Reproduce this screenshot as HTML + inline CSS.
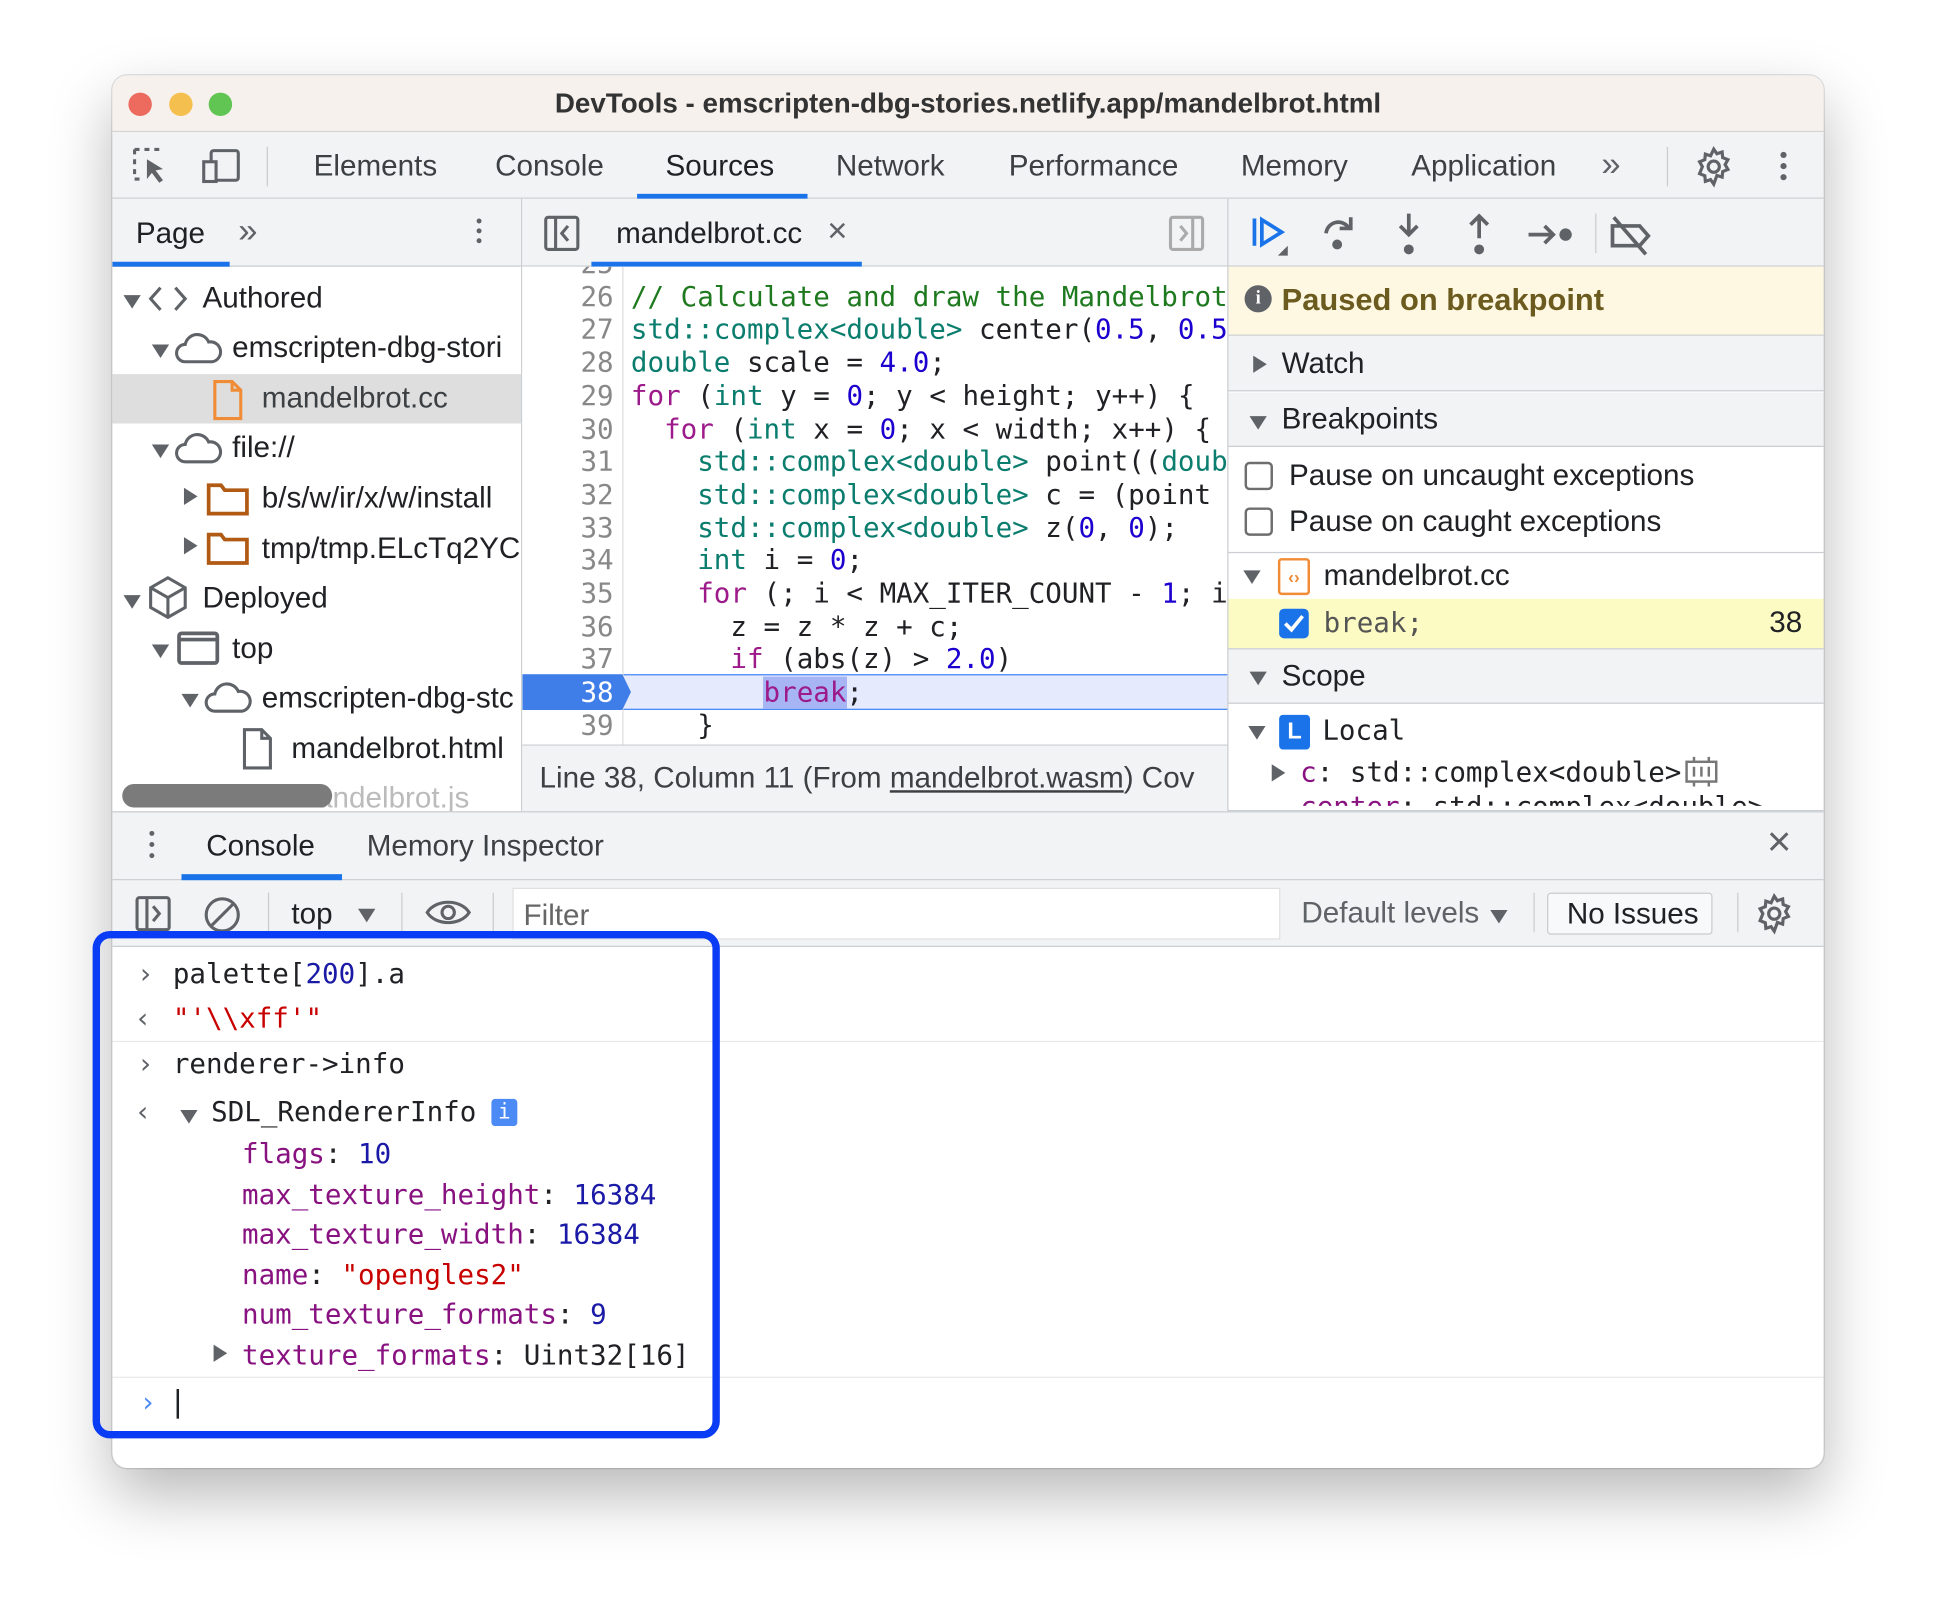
<!DOCTYPE html>
<html><head><meta charset="utf-8"><style>
*{box-sizing:border-box;margin:0;padding:0}
body{width:1936px;height:1616px;background:#fff;overflow:hidden;position:relative;font-family:"Liberation Sans",Arial,sans-serif;color:#202124}
#s{position:absolute;left:0;top:0;width:1568px;height:1309px;transform:scale(1.23469);transform-origin:0 0}
.a{position:absolute;white-space:nowrap}
.win{position:absolute;left:91px;top:61px;width:1386px;height:1128px;border-radius:12px;background:#fff;overflow:hidden;box-shadow:0 22px 50px rgba(0,0,0,.28),0 0 0 1px rgba(0,0,0,.12)}
.t{font-size:24px;line-height:28px}
.m{font-family:"DejaVu Sans Mono","Liberation Mono",monospace;font-size:22.3px;line-height:26.7px;white-space:pre}
.gr{background:#f1f3f4}
.cm{color:#1f7a1f}.ty{color:#0b7d6e}.kw{color:#9c1a8a}.nu{color:#1c00cf}.st{color:#c80000}.pr{color:#881280}.nb{color:#1a1aa6}
.tri{display:inline-block;width:0;height:0;border-left:7px solid transparent;border-right:7px solid transparent;border-top:11px solid #5f6368}
.trr{display:inline-block;width:0;height:0;border-top:7px solid transparent;border-bottom:7px solid transparent;border-left:11px solid #5f6368}
.hl{position:absolute;height:1px;background:#cacdd1}
</style></head><body><div id="s">
<div class="win">
 <div class="a" style="left:0;top:0;width:1386px;height:46px;background:#f6f1ed;border-bottom:1px solid #d6d3d0"></div>
 <div class="a" style="left:13px;top:14px;width:19px;height:19px;border-radius:50%;background:#ed6a5e"></div>
 <div class="a" style="left:46px;top:14px;width:19px;height:19px;border-radius:50%;background:#f5bf4f"></div>
 <div class="a" style="left:78px;top:14px;width:19px;height:19px;border-radius:50%;background:#61c554"></div>
 <div class="a" style="left:0;width:1386px;top:9px;text-align:center;font-weight:bold;font-size:22.5px;line-height:28px;color:#333">DevTools - emscripten-dbg-stories.netlify.app/mandelbrot.html</div>
 <div class="a gr" style="left:0;top:46px;width:1386px;height:54px;border-bottom:1px solid #cacdd1"></div>
 <svg class="a" style="left:16px;top:58px" width="36" height="32" viewBox="0 0 36 32" fill="none" stroke="#5f6368" stroke-width="2.5"><path d="M2 2h4M10 2h4M18 2h4M2 2v4M2 10v4M2 18v4M2 26h4" /><path d="M12 10l0 16 4-5 6 8 3-2-6-8 6-1z" fill="#5f6368" stroke="none"/></svg>
 <svg class="a" style="left:72px;top:58px" width="36" height="32" fill="none" stroke="#5f6368" stroke-width="2.5"><rect x="8" y="3" width="22" height="24" rx="2"/><rect x="2" y="12" width="10" height="16" fill="#f1f3f4"/></svg>
 <div class="a" style="left:125px;top:58px;width:1px;height:32px;background:#ccc"></div>
 <div class="a t" style="left:163px;top:60px;color:#3c4043">Elements</div>
 <div class="a t" style="left:310px;top:60px;color:#3c4043">Console</div>
 <div class="a t" style="left:448px;top:60px;color:#202124">Sources</div>
 <div class="a" style="left:425px;top:96px;width:138px;height:4px;background:#1a73e8"></div>
 <div class="a t" style="left:586px;top:60px;color:#3c4043">Network</div>
 <div class="a t" style="left:726px;top:60px;color:#3c4043">Performance</div>
 <div class="a t" style="left:914px;top:60px;color:#3c4043">Memory</div>
 <div class="a t" style="left:1052px;top:60px;color:#3c4043">Application</div>
 <div class="a t" style="left:1206px;top:58px;color:#5f6368;font-size:28px">&#187;</div>
 <div class="a" style="left:1259px;top:58px;width:1px;height:32px;background:#ccc"></div>
 <svg class="a" style="left:1280px;top:57px" width="34" height="34" viewBox="0 0 24 24" fill="none" stroke="#5f6368" stroke-width="1.8"><circle cx="12" cy="12" r="3.2"/><path d="M12 2l1.8 2.6 3-1 .3 3.2 3 1.2-1.6 2.8 1.6 2.8-3 1.2-.3 3.2-3-1L12 22l-1.8-2.6-3 1-.3-3.2-3-1.2L5.5 12 3.9 9.2l3-1.2.3-3.2 3 1z"/></svg>
 <div class="a" style="left:1351px;top:62px;width:5px;height:5px;border-radius:50%;background:#5f6368;box-shadow:0 9px 0 #5f6368,0 18px 0 #5f6368"></div>

 <div class="a gr" style="left:0;top:100px;width:331px;height:55px;border-bottom:1px solid #cacdd1"></div>
 <div class="a t" style="left:19px;top:115px">Page</div>
 <div class="a" style="left:0;top:151px;width:95px;height:4px;background:#1a73e8"></div>
 <div class="a t" style="left:102px;top:112px;color:#5f6368;font-size:28px">&#187;</div>
 <div class="a" style="left:295px;top:116px;width:4px;height:4px;border-radius:50%;background:#5f6368;box-shadow:0 8px 0 #5f6368,0 16px 0 #5f6368"></div>
 <div class="a" style="left:331px;top:100px;width:1px;height:496px;background:#cacdd1"></div>
 <div class="a" style="left:0;top:242px;width:331px;height:40px;background:#dedede"></div>
 <div class="a" style="left:9px;top:176px"><span class="tri"></span></div>
 <svg class="a" style="left:27px;top:169px" width="36" height="24" fill="none" stroke="#5f6368" stroke-width="2.5"><path d="M12 3L4 12l8 9M24 3l8 9-8 9"/></svg>
 <div class="a t" style="left:73px;top:167px">Authored</div>
 <div class="a" style="left:32px;top:216px"><span class="tri"></span></div>
 <svg class="a" style="left:50px;top:207px" width="40" height="28" fill="none" stroke="#5f6368" stroke-width="2.5"><path d="M9 25a7 7 0 010-14 10 10 0 0119-2 7 7 0 013 16z"/></svg>
 <div class="a t" style="left:97px;top:207px">emscripten-dbg-stori</div>
 <svg class="a" style="left:80px;top:246px" width="28" height="34" fill="none" stroke="#f08b36" stroke-width="2.5"><path d="M3 2h14l7 7v23H3z M17 2v7h7"/></svg>
 <div class="a t" style="left:121px;top:248px;color:#3c4043">mandelbrot.cc</div>
 <div class="a" style="left:32px;top:297px"><span class="tri"></span></div>
 <svg class="a" style="left:50px;top:288px" width="40" height="28" fill="none" stroke="#5f6368" stroke-width="2.5"><path d="M9 25a7 7 0 010-14 10 10 0 0119-2 7 7 0 013 16z"/></svg>
 <div class="a t" style="left:97px;top:288px">file://</div>
 <div class="a" style="left:58px;top:334px"><span class="trr"></span></div>
 <svg class="a" style="left:76px;top:329px" width="36" height="28" fill="none" stroke="#b05a14" stroke-width="3"><path d="M2 26V3h10l3 4h18v19z"/></svg>
 <div class="a t" style="left:121px;top:329px">b/s/w/ir/x/w/install</div>
 <div class="a" style="left:58px;top:374px"><span class="trr"></span></div>
 <svg class="a" style="left:76px;top:369px" width="36" height="28" fill="none" stroke="#b05a14" stroke-width="3"><path d="M2 26V3h10l3 4h18v19z"/></svg>
 <div class="a t" style="left:121px;top:370px">tmp/tmp.ELcTq2YC</div>
 <div class="a" style="left:9px;top:419px"><span class="tri"></span></div>
 <svg class="a" style="left:28px;top:405px" width="34" height="36" fill="none" stroke="#5f6368" stroke-width="2.5"><path d="M17 2l14 8v16l-14 8-14-8V10z M3 10l14 8 14-8 M17 18v16"/></svg>
 <div class="a t" style="left:73px;top:410px">Deployed</div>
 <div class="a" style="left:32px;top:459px"><span class="tri"></span></div>
 <svg class="a" style="left:52px;top:449px" width="36" height="30" fill="none" stroke="#5f6368" stroke-width="3"><rect x="2" y="3" width="31" height="24" rx="2"/><path d="M2 8h31"/></svg>
 <div class="a t" style="left:97px;top:451px">top</div>
 <div class="a" style="left:56px;top:499px"><span class="tri"></span></div>
 <svg class="a" style="left:74px;top:490px" width="40" height="28" fill="none" stroke="#5f6368" stroke-width="2.5"><path d="M9 25a7 7 0 010-14 10 10 0 0119-2 7 7 0 013 16z"/></svg>
 <div class="a t" style="left:121px;top:491px">emscripten-dbg-stc</div>
 <svg class="a" style="left:104px;top:528px" width="28" height="36" fill="none" stroke="#5f6368" stroke-width="2.5"><path d="M3 2h14l7 7v24H3z M17 2v7h7"/></svg>
 <div class="a t" style="left:145px;top:532px">mandelbrot.html</div>
 <div class="a t" style="left:145px;top:572px;color:#bbb">mandelbrot.js</div>
 <div class="a" style="left:8px;top:574px;width:170px;height:19px;border-radius:10px;background:#7b7b7b"></div>

 <div class="a gr" style="left:332px;top:100px;width:572px;height:55px;border-bottom:1px solid #cacdd1"></div>
 <svg class="a" style="left:349px;top:113px" width="30" height="30" fill="none" stroke="#5f6368" stroke-width="2.5"><rect x="2" y="2" width="26" height="26" rx="2"/><path d="M10 2v26M20 9l-5 6 5 6" /></svg>
 <div class="a t" style="left:408px;top:115px">mandelbrot.cc</div>
 <div class="a t" style="left:579px;top:112px;color:#5f6368;font-size:28px">&#215;</div>
 <div class="a" style="left:388px;top:151px;width:219px;height:4px;background:#1a73e8"></div>
 <svg class="a" style="left:855px;top:113px" width="30" height="30" fill="none" stroke="#aaa" stroke-width="2.5"><rect x="2" y="2" width="26" height="26" rx="2"/><path d="M20 2v26M10 9l5 6-5 6"/></svg>
 <div class="a" style="left:332px;top:155px;width:572px;height:387px;background:#fff;overflow:hidden">
  <div class="a" style="left:81px;top:0;width:1px;height:387px;background:#ddd"></div>
  <div class="a" style="left:82px;top:330px;width:490px;height:29px;background:#e5ebfd;border-top:1.5px solid #4285f4;border-bottom:1.5px solid #4285f4"></div>
  <svg class="a" style="left:0;top:330px" width="90" height="29"><path d="M0 0h81l7 14.5-7 14.5H0z" fill="#3f7ee8"/></svg>
  <div class="a m" style="left:0;top:-15px;width:74px;text-align:right;color:#888">25
26
27
28
29
30
31
32
33
34
35
36
37
<span style="color:#fff">38</span>
39</div>
  <div class="a m" style="left:88px;top:-15px;color:#202124">
<span class="cm">// Calculate and draw the Mandelbrot</span>
<span class="ty">std::complex&lt;double&gt;</span> center(<span class="nu">0.5</span>, <span class="nu">0.5</span>
<span class="ty">double</span> scale = <span class="nu">4.0</span>;
<span class="kw">for</span> (<span class="ty">int</span> y = <span class="nu">0</span>; y &lt; height; y++) {
  <span class="kw">for</span> (<span class="ty">int</span> x = <span class="nu">0</span>; x &lt; width; x++) {
    <span class="ty">std::complex&lt;double&gt;</span> point((<span class="ty">doub</span>
    <span class="ty">std::complex&lt;double&gt;</span> c = (point
    <span class="ty">std::complex&lt;double&gt;</span> z(<span class="nu">0</span>, <span class="nu">0</span>);
    <span class="ty">int</span> i = <span class="nu">0</span>;
    <span class="kw">for</span> (; i &lt; MAX_ITER_COUNT - <span class="nu">1</span>; i
      z = z * z + c;
      <span class="kw">if</span> (abs(z) &gt; <span class="nu">2.0</span>)
        <span class="kw" style="background:#a8b5f5">break</span>;
    }</div>
 </div>
 <div class="a" style="left:332px;top:542px;width:572px;height:1px;background:#cacdd1"></div>
 <div class="a gr" style="left:332px;top:543px;width:572px;height:53px"></div>
 <div class="a t" style="left:346px;top:556px;color:#3c4043">Line 38, Column 11  (From <u>mandelbrot.wasm</u>)  Cov</div>
 <div class="a" style="left:903px;top:100px;width:1px;height:496px;background:#cacdd1"></div>

 <div class="a gr" style="left:904px;top:100px;width:482px;height:55px;border-bottom:1px solid #cacdd1"></div>
 <svg class="a" style="left:922px;top:112px" width="36" height="36"><path d="M3 4v22" stroke="#1a73e8" stroke-width="3"/><path d="M9 5l16 10-16 10z" fill="none" stroke="#1a73e8" stroke-width="3"/><path d="M30 26v8h-8z" fill="#5f6368"/></svg>
 <svg class="a" style="left:978px;top:112px" width="32" height="34" fill="none" stroke="#5f6368" stroke-width="3"><path d="M5 16a10 10 0 0118-5"/><path d="M25 3v9h-9" /><circle cx="14" cy="25" r="4" fill="#5f6368" stroke="none"/></svg>
 <svg class="a" style="left:1038px;top:110px" width="24" height="38" fill="none" stroke="#5f6368" stroke-width="3"><path d="M12 2v17M5 12l7 7 7-7"/><circle cx="12" cy="31" r="4" fill="#5f6368" stroke="none"/></svg>
 <svg class="a" style="left:1095px;top:110px" width="24" height="38" fill="none" stroke="#5f6368" stroke-width="3"><path d="M12 4v18M5 11l7-7 7 7"/><circle cx="12" cy="31" r="4" fill="#5f6368" stroke="none"/></svg>
 <svg class="a" style="left:1145px;top:116px" width="40" height="26" fill="none" stroke="#5f6368" stroke-width="3"><path d="M2 13h20M15 6l7 7-7 7"/><circle cx="32" cy="13" r="5" fill="#5f6368" stroke="none"/></svg>
 <div class="a" style="left:1201px;top:112px;width:1px;height:32px;background:#ccc"></div>
 <svg class="a" style="left:1212px;top:112px" width="36" height="36" fill="none" stroke="#5f6368" stroke-width="3"><path d="M3 10h22l7 8-7 8H3z"/><path d="M4 3l26 30" /></svg>
 <div class="a" style="left:904px;top:155px;width:482px;height:56px;background:#fef8e3;border-bottom:1px solid #cacdd1"></div>
 <div class="a" style="left:917px;top:170px;width:22px;height:22px;border-radius:50%;background:#5f6368;color:#fff;font-size:15px;font-weight:bold;text-align:center;line-height:22px;font-family:'Liberation Serif',serif">i</div>
 <div class="a t" style="left:947px;top:168px;font-weight:bold;color:#6b5b1e;font-size:25px">Paused on breakpoint</div>
 <div class="a gr" style="left:904px;top:211px;width:482px;height:45px;border-bottom:1px solid #cacdd1"></div>
 <div class="a" style="left:924px;top:227px"><span class="trr"></span></div>
 <div class="a t" style="left:947px;top:220px">Watch</div>
 <div class="a gr" style="left:904px;top:257px;width:482px;height:44px;border-bottom:1px solid #cacdd1"></div>
 <div class="a" style="left:921px;top:274px"><span class="tri"></span></div>
 <div class="a t" style="left:947px;top:265px">Breakpoints</div>
 <div class="a" style="left:917px;top:313px;width:23px;height:23px;border:2px solid #6e6e6e;border-radius:4px"></div>
 <div class="a t" style="left:953px;top:311px">Pause on uncaught exceptions</div>
 <div class="a" style="left:917px;top:350px;width:23px;height:23px;border:2px solid #6e6e6e;border-radius:4px"></div>
 <div class="a t" style="left:953px;top:348px">Pause on caught exceptions</div>
 <div class="hl" style="left:904px;top:386px;width:482px"></div>
 <div class="a" style="left:916px;top:399px"><span class="tri"></span></div>
 <div class="a" style="left:944px;top:391px;width:26px;height:30px;border:2px solid #f08b36;border-radius:3px;color:#f08b36;font-size:14px;text-align:center;line-height:26px;font-weight:bold">&lsaquo;&rsaquo;</div>
 <div class="a t" style="left:981px;top:392px">mandelbrot.cc</div>
 <div class="a" style="left:904px;top:424px;width:482px;height:40px;background:#fdfbc4"></div>
 <div class="a" style="left:945px;top:432px;width:24px;height:24px;border-radius:4px;background:#1a73e8"></div>
 <svg class="a" style="left:948px;top:436px" width="18" height="16" fill="none" stroke="#fff" stroke-width="3"><path d="M2 8l5 5 9-11"/></svg>
 <div class="a m" style="left:981px;top:431px;color:#555">break;</div>
 <div class="a t" style="left:1342px;top:430px">38</div>
 <div class="a gr" style="left:904px;top:464px;width:482px;height:45px;border-top:1px solid #cacdd1;border-bottom:1px solid #cacdd1"></div>
 <div class="a" style="left:921px;top:481px"><span class="tri"></span></div>
 <div class="a t" style="left:947px;top:473px">Scope</div>
 <div class="a" style="left:920px;top:525px"><span class="tri"></span></div>
 <div class="a" style="left:945px;top:518px;width:25px;height:28px;border-radius:3px;background:#1a73e8;color:#fff;font-weight:bold;font-size:19px;text-align:center;line-height:28px">L</div>
 <div class="a m" style="left:980px;top:518px">Local</div>
 <div class="a" style="left:939px;top:558px"><span class="trr"></span></div>
 <div class="a m" style="left:962px;top:552px"><span class="pr">c</span>: std::complex&lt;double&gt;</div>
 <svg class="a" style="left:1273px;top:551px" width="28" height="26" fill="none" stroke="#777" stroke-width="2"><rect x="2" y="5" width="24" height="16"/><path d="M8 9v8M14 9v8M20 9v8M8 1v4M20 1v4M8 21v4M20 21v4"/></svg>
 <div class="a m" style="left:962px;top:580px;clip-path:inset(0 0 15px 0)"><span class="pr">center</span>: std::complex&lt;double&gt;</div>
 <div class="a" style="left:904px;top:595px;width:482px;height:1px;background:#cacdd1"></div>

 <div class="a gr" style="left:0;top:596px;width:1386px;height:56px;border-top:1px solid #cacdd1;border-bottom:1px solid #cacdd1"></div>
 <div class="a" style="left:30px;top:612px;width:4px;height:4px;border-radius:50%;background:#5f6368;box-shadow:0 9px 0 #5f6368,0 18px 0 #5f6368"></div>
 <div class="a t" style="left:76px;top:611px">Console</div>
 <div class="a" style="left:56px;top:647px;width:130px;height:5px;background:#1a73e8"></div>
 <div class="a t" style="left:206px;top:611px;color:#3c4043">Memory Inspector</div>
 <div class="a t" style="left:1340px;top:607px;color:#5f6368;font-size:34px">&#215;</div>
 <div class="a gr" style="left:0;top:652px;width:1386px;height:54px;border-bottom:1px solid #cacdd1"></div>
 <svg class="a" style="left:18px;top:664px" width="30" height="30" fill="none" stroke="#5f6368" stroke-width="2.5"><rect x="2" y="2" width="26" height="26" rx="2"/><path d="M10 2v26M15 9l5 6-5 6"/></svg>
 <svg class="a" style="left:73px;top:664px" width="32" height="32" fill="none" stroke="#5f6368" stroke-width="2.5"><circle cx="16" cy="16" r="13"/><path d="M7 25L25 7"/></svg>
 <div class="a" style="left:126px;top:662px;width:1px;height:32px;background:#ccc"></div>
 <div class="a t" style="left:145px;top:666px">top</div>
 <div class="a" style="left:199px;top:673px"><span class="tri"></span></div>
 <div class="a" style="left:234px;top:662px;width:1px;height:32px;background:#ccc"></div>
 <svg class="a" style="left:253px;top:664px" width="38" height="28" fill="none" stroke="#5f6368" stroke-width="2.5"><path d="M2 14C9 3 29 3 36 14 29 25 9 25 2 14z"/><circle cx="19" cy="14" r="5"/></svg>
 <div class="a" style="left:308px;top:662px;width:1px;height:32px;background:#ccc"></div>
 <div class="a" style="left:324px;top:658px;width:622px;height:42px;background:#fff;border:1px solid #e0e0e0"></div>
 <div class="a t" style="left:333px;top:667px;color:#666">Filter</div>
 <div class="a t" style="left:963px;top:665px;color:#5f6368">Default levels</div>
 <div class="a" style="left:1116px;top:674px"><span class="tri"></span></div>
 <div class="a" style="left:1151px;top:662px;width:1px;height:32px;background:#ccc"></div>
 <div class="a" style="left:1162px;top:662px;width:134px;height:34px;border:1px solid #ccc;border-radius:3px;background:#f8f9fa"></div>
 <div class="a t" style="left:1178px;top:666px">No Issues</div>
 <div class="a" style="left:1316px;top:662px;width:1px;height:32px;background:#ccc"></div>
 <svg class="a" style="left:1329px;top:662px" width="34" height="34" viewBox="0 0 24 24" fill="none" stroke="#5f6368" stroke-width="1.8"><circle cx="12" cy="12" r="3.2"/><path d="M12 2l1.8 2.6 3-1 .3 3.2 3 1.2-1.6 2.8 1.6 2.8-3 1.2-.3 3.2-3-1L12 22l-1.8-2.6-3 1-.3-3.2-3-1.2L5.5 12 3.9 9.2l3-1.2.3-3.2 3 1z"/></svg>

 <div class="hl" style="left:0;top:782px;width:1386px;background:#e8e8e8"></div>
 <div class="hl" style="left:0;top:1054px;width:1386px;background:#e8e8e8"></div>
 <div class="a m" style="left:20px;top:715px;color:#5f6368">&rsaquo;</div>
 <div class="a m" style="left:49px;top:715px">palette[<span class="nb">200</span>].a</div>
 <div class="a m" style="left:18px;top:751px;color:#5f6368">&lsaquo;</div>
 <div class="a m" style="left:49px;top:751px"><span class="st">"'\\xff'"</span></div>
 <div class="a m" style="left:20px;top:788px;color:#5f6368">&rsaquo;</div>
 <div class="a m" style="left:49px;top:788px">renderer-&gt;info</div>
 <div class="a m" style="left:18px;top:827px;color:#5f6368">&lsaquo;</div>
 <div class="a" style="left:55px;top:836px"><span class="tri"></span></div>
 <div class="a m" style="left:80px;top:827px">SDL_RendererInfo</div>
 <div class="a" style="left:307px;top:829px;width:21px;height:22px;border-radius:3px;background:#4c8bf5;color:#fff;font-size:17px;text-align:center;line-height:22px;font-family:'DejaVu Sans Mono',monospace">i</div>
 <div class="a m" style="left:105px;top:858px;line-height:32.6px"><span class="pr">flags</span>: <span class="nb">10</span>
<span class="pr">max_texture_height</span>: <span class="nb">16384</span>
<span class="pr">max_texture_width</span>: <span class="nb">16384</span>
<span class="pr">name</span>: <span class="st">"opengles2"</span>
<span class="pr">num_texture_formats</span>: <span class="nb">9</span>
<span class="pr">texture_formats</span>: Uint32[16]</div>
 <div class="a" style="left:82px;top:1028px"><span class="trr"></span></div>
 <div class="a m" style="left:22px;top:1062px;color:#4c8bf5">&rsaquo;</div>
 <div class="a" style="left:52px;top:1064px;width:2px;height:24px;background:#202124"></div>
</div>
<div class="a" style="left:75px;top:754px;width:508px;height:411px;border:6px solid #0a3cf5;border-radius:14px"></div>
</div></body></html>
